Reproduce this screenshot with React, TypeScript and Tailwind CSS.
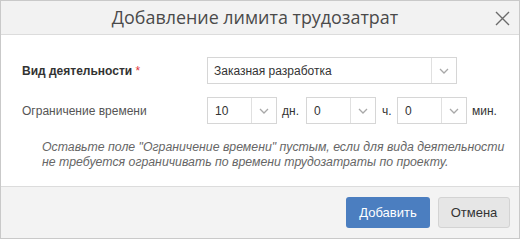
import React from "react";

const Chevron = () => (
  <svg width="10" height="6" viewBox="0 0 10 6" fill="none" aria-hidden>
    <path d="M1 1l4 4 4-4" stroke="#a8a8a8" strokeWidth="1.3" />
  </svg>
);

const SmallSelect = ({ value }: { value: string }) => (
  <div className="flex h-[27px] w-[70px] border border-[#d6d6d6] bg-white">
    <div className="flex flex-1 items-center pl-[7px] text-[12px] text-[#333]">{value}</div>
    <div className="flex w-[25px] items-center justify-center border-l border-[#e0e0e0]">
      <Chevron />
    </div>
  </div>
);

export default function App() {
  return (
    <div className="h-[240px] w-[522px] bg-white" style={{ fontFamily: '"Liberation Sans", Arial, sans-serif' }}>
      <div className="flex h-[239px] w-[520px] flex-col border border-[#c9c9c9]">
        {/* header */}
        <div className="relative flex h-[34px] items-center justify-center border-b border-[#dcdcdc] bg-[#f2f2f2] pr-[10px]">
          <span
            className="text-[17.9px] text-[#4a4a4a]"
            style={{ fontFamily: '"Open Sans", sans-serif' }}
          >
            Добавление лимита трудозатрат
          </span>
          <svg className="absolute right-[9px] top-[10px]" width="15" height="15" viewBox="0 0 15 15" aria-hidden>
            <path d="M1 1l13 13M14 1L1 14" stroke="#6b6b6b" strokeWidth="1.4" />
          </svg>
        </div>

        {/* body */}
        <div className="flex flex-1 flex-col pl-[21px] pt-[22px]">
          <div className="flex items-center">
            <div className="w-[185px] text-[12px] font-bold text-[#333]">
              Вид деятельности <span className="font-normal text-[#e0333a]">*</span>
            </div>
            <div className="flex h-[27px] w-[250px] border border-[#d6d6d6] bg-white">
              <div className="flex flex-1 items-center pl-[6px] text-[12px] text-[#333]">Заказная разработка</div>
              <div className="flex w-[25px] items-center justify-center border-l border-[#e0e0e0]">
                <Chevron />
              </div>
            </div>
          </div>

          <div className="mt-[13px] flex items-center text-[12px] text-[#555]">
            <div className="w-[185px]">Ограничение времени</div>
            <SmallSelect value="10" />
            <span className="ml-[5px] mr-[8px] w-[16px] text-[#333]">дн.</span>
            <SmallSelect value="0" />
            <span className="ml-[6px] mr-[8px] w-[7px] text-[#333]">ч.</span>
            <SmallSelect value="0" />
            <span className="ml-[5px] text-[#333]">мин.</span>
          </div>

          <p className="mt-[16px] pl-[20px] text-[12.3px] italic leading-[15px] text-[#666]">
            Оставьте поле "Ограничение времени" пустым, если для вида деятельности
            <br />
            не требуется ограничивать по времени трудозатраты по проекту.
          </p>
        </div>

        {/* footer */}
        <div className="flex h-[52px] items-center justify-end gap-[8px] border-t border-[#dcdcdc] bg-[#f3f3f3] pr-[9px]">
          <button className="h-[31px] w-[84px] rounded-[3px] bg-[#4b7ec0] text-[13px] text-white">
            Добавить
          </button>
          <button className="h-[31px] w-[72px] rounded-[3px] border border-[#d3d3d3] bg-[#e6e6e6] text-[13px] text-[#333]">
            Отмена
          </button>
        </div>
      </div>
    </div>
  );
}
